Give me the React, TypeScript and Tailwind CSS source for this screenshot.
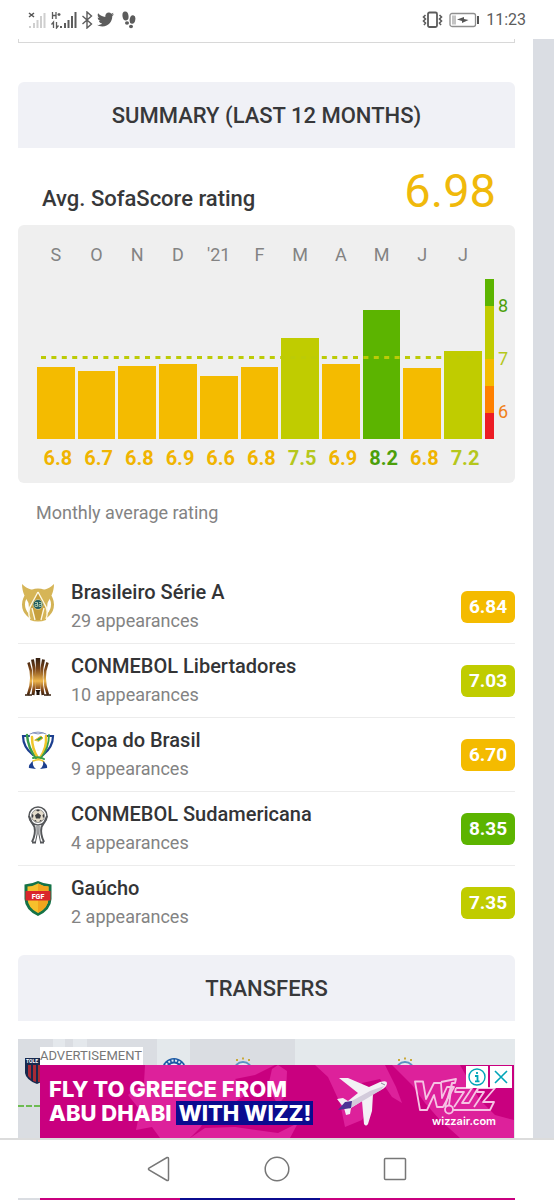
import { ReactNode } from "react";
import { FaTwitter } from "react-icons/fa";

type Month = {
  label: string;
  rating: string;
  height: number;
  bar: string;
  text: string;
};

type Tournament = {
  name: string;
  appearances: number;
  rating: string;
  badge: string;
  logo: ReactNode;
};

const AMBER = { bar: "bg-[#f4bb00]", text: "text-[#f0b400]" };
const LIME = { bar: "bg-[#c0cc00]", text: "text-[#b5c71c]" };
const GREEN = { bar: "bg-[#5cb400]", text: "text-[#4c9f0a]" };

const months: Month[] = [
  { label: "S", rating: "6.8", height: 72, ...AMBER },
  { label: "O", rating: "6.7", height: 68, ...AMBER },
  { label: "N", rating: "6.8", height: 73, ...AMBER },
  { label: "D", rating: "6.9", height: 75, ...AMBER },
  { label: "'21", rating: "6.6", height: 63, ...AMBER },
  { label: "F", rating: "6.8", height: 72, ...AMBER },
  { label: "M", rating: "7.5", height: 101, ...LIME },
  { label: "A", rating: "6.9", height: 75, ...AMBER },
  { label: "M", rating: "8.2", height: 129, ...GREEN },
  { label: "J", rating: "6.8", height: 71, ...AMBER },
  { label: "J", rating: "7.2", height: 88, ...LIME },
];

function BrasileiroLogo() {
  return (
    <svg viewBox="0 0 34 40" className="h-10 w-[34px]" aria-hidden="true">
      <circle cx="17" cy="21.500" r="14.500" fill="none" stroke="#d3b356" strokeWidth="3" />
      <path
        d="M1 1C7 7 12 7 17 7S27 7 33 1C33 10 29 15 26.500 20L25 37Q17 40 9 37L7.500 20C5 15 1 10 1 1Z"
        fill="#d6b557"
      />
      <path d="M17 9L10 24L13 37H21L24 24Z" fill="#c79f3c" />
      <path
        d="M17 9L10 22Q6 28 9 36M17 9L24 22Q28 28 25 36M11 25L14 37M23 25L20 37"
        stroke="#fdf8e4"
        strokeWidth="1.400"
        fill="none"
      />
      <circle cx="17" cy="21.500" r="5" fill="#1f5c60" stroke="#e6d38f" strokeWidth="0.800" />
      <path
        d="M14 19.500H16.500V21.500H14V23.500H16.500V19.500M18 19.500H20.500V21.500H18V23.500H20.500V19.500"
        stroke="#b9cfae"
        strokeWidth="0.800"
        fill="none"
      />
    </svg>
  );
}

function LibertadoresLogo() {
  return (
    <svg viewBox="0 0 34 40" className="h-10 w-[34px]" aria-hidden="true">
      <defs>
        <linearGradient id="libertadores" x1="0" y1="0" x2="0" y2="40" gradientUnits="userSpaceOnUse">
          <stop offset="0" stopColor="#2c1a10" />
          <stop offset="0.3" stopColor="#7a4519" />
          <stop offset="0.6" stopColor="#eeb64c" />
          <stop offset="0.8" stopColor="#8a4e1b" />
          <stop offset="1" stopColor="#1f120b" />
        </linearGradient>
      </defs>
      <g fill="none" stroke="url(#libertadores)">
        <path d="M17 1L17.010 32" strokeWidth="4.500" />
        <path d="M11.500 2.500Q15.500 19 12 38M22.500 2.500Q18.500 19 22 38" strokeWidth="3" />
        <path d="M7.500 5.500Q13.500 21 7 38M26.500 5.500Q20.500 21 27 38" strokeWidth="2.600" />
        <path d="M11 38L4 38.010M23 38L30 38.010" strokeWidth="1.500" />
      </g>
      <path d="M15.500 38V35L14.500 33H19.500L18.500 35V38Z" fill="#1f120b" />
    </svg>
  );
}

function CopaDoBrasilLogo() {
  return (
    <svg viewBox="0 0 34 40" className="h-10 w-[34px]" aria-hidden="true">
      <g fill="none" strokeLinecap="round">
        <path d="M8 5H2Q2 16 12 24M26 5H32Q32 16 22 24" stroke="#1c3f8f" strokeWidth="2.200" />
        <path d="M6 4Q7 17 15 27" stroke="#3a9d4b" strokeWidth="2.500" />
        <path d="M11 6Q11 18 17 27M25 5Q26 17 19 27" stroke="#f0c62a" strokeWidth="2.500" />
        <path d="M28 4Q28 17 20 27" stroke="#3a9d4b" strokeWidth="1.800" />
        <path d="M9 3Q17 -1 25 3M12 2Q17 4 22 2" stroke="#8795bd" strokeWidth="1" />
        <path d="M14 9L20 5L22 7L18 10Z" fill="#3a9d4b" stroke="#e0b92a" strokeWidth="1" />
        <path d="M12 27Q18 25 23 28" stroke="#3a9d4b" strokeWidth="2" />
        <path d="M12 30Q20 27 23 31" stroke="#f0c62a" strokeWidth="1.500" />
      </g>
      <path d="M12 30Q7 34 8 37L15 38Q11 35 12 30ZM22 30Q27 34 26 37L19 38Q23 35 22 30Z" fill="#1c3f8f" />
    </svg>
  );
}

function SudamericanaLogo() {
  return (
    <svg viewBox="0 0 34 40" className="h-10 w-[34px]" aria-hidden="true">
      <g fill="none" stroke="#55575a">
        <circle cx="17" cy="11" r="9" strokeWidth="1.500" />
        <path d="M8 11Q10 17 13.500 22Q15 29 11 37M26 11Q24 17 20.500 22Q19 29 23 37" strokeWidth="2" />
        <path d="M16 21Q17 29 14.500 37M18 21Q17 29 19.500 37" strokeWidth="1" />
        <path d="M11 37.500H15M19 37.500H23" strokeWidth="2" />
      </g>
      <circle cx="17" cy="11" r="6.500" fill="#e4dccb" stroke="#777" strokeWidth="0.800" />
      <path
        d="M17 8L20 10.300L19 13.500H15L14 10.300ZM17 4.500L19 5.500L17 6.500L15 5.500ZM11 9L12.500 10L12 13L11 12ZM23 9L21.500 10L22 13L23 12ZM13 15.500L15 15L15.500 17ZM21 15.500L19 15L18.500 17Z"
        fill="#3f3f42"
      />
    </svg>
  );
}

function GauchoLogo() {
  return (
    <svg viewBox="0 0 34 40" className="h-10 w-[34px]" aria-hidden="true">
      <path
        d="M3.500 5.500Q11 5 17 2Q23 5 30.500 5.500V20Q30 31 17 37Q4 31 3.500 20Z"
        fill="#157347"
      />
      <path d="M6.500 7.500Q13 7 17 4.500Q21 7 27.500 7.500V20Q27 29 17 34Q7 29 6.500 20Z" fill="#f6c02c" />
      <path d="M17 4.500Q21 7 27.500 7.500V20Q27 29 17 34Z" fill="#f2a51d" />
      <path d="M4.500 12H29.500V21.500H4.500Z" fill="#d9262c" />
      <text
        x="17"
        y="19.500"
        textAnchor="middle"
        fontFamily="Roboto, sans-serif"
        fontSize="7"
        fontWeight="900"
        fill="#fff"
      >
        FGF
      </text>
    </svg>
  );
}

const tournaments: Tournament[] = [
  {
    name: "Brasileiro Série A",
    appearances: 29,
    rating: "6.84",
    badge: "bg-[#f4bb00]",
    logo: <BrasileiroLogo />,
  },
  {
    name: "CONMEBOL Libertadores",
    appearances: 10,
    rating: "7.03",
    badge: "bg-[#c0cc00]",
    logo: <LibertadoresLogo />,
  },
  {
    name: "Copa do Brasil",
    appearances: 9,
    rating: "6.70",
    badge: "bg-[#f4bb00]",
    logo: <CopaDoBrasilLogo />,
  },
  {
    name: "CONMEBOL Sudamericana",
    appearances: 4,
    rating: "8.35",
    badge: "bg-[#5cb400]",
    logo: <SudamericanaLogo />,
  },
  {
    name: "Gaúcho",
    appearances: 2,
    rating: "7.35",
    badge: "bg-[#c0cc00]",
    logo: <GauchoLogo />,
  },
];

function StatusBar() {
  return (
    <header className="flex h-[39px] items-center justify-between px-7 text-[#5c5c5c]">
      <div className="flex items-center gap-1">
        {/* SIM 1, no signal */}
        <svg viewBox="0 0 18 18" className="size-[18px]" aria-hidden="true">
          <path d="M1 2L6 6M6 2L1 6" stroke="#555" strokeWidth="1.500" />
          <path
            d="M2 17V15M6 17V12M9.500 17V9M13 17V5M16.500 17V2"
            stroke="#cfcfcf"
            strokeWidth="2"
          />
        </svg>
        {/* SIM 2, H+ */}
        <svg viewBox="0 0 27 18" className="h-[18px] w-[27px]" aria-hidden="true">
          <g stroke="currentColor" fill="none">
            <path d="M2.500 1V8M6 1V8M2.500 4.500H6M7.500 3.500H10.500M9 2V5" strokeWidth="1.300" />
            <path d="M3.500 17V11L1.500 13.500M6.500 11V17L8.500 14.500" strokeWidth="1.300" />
            <path
              d="M11 17V15M15 17V12M18.500 17V9M22 17V5M25.500 17V1"
              strokeWidth="2"
            />
          </g>
        </svg>
        <svg viewBox="0 0 12 18" className="h-[18px] w-3" aria-hidden="true">
          <path
            d="M1.500 5L10.500 13L6 17V1L10.500 5L1.500 13"
            fill="none"
            stroke="currentColor"
            strokeWidth="1.400"
          />
        </svg>
        <FaTwitter className="size-[17px]" />
        <svg viewBox="0 0 14 18" className="ml-1 h-[18px] w-[14px]" aria-hidden="true">
          <g fill="currentColor">
            <ellipse cx="3.500" cy="5" rx="3" ry="4.500" transform="rotate(-8 3.500 5)" />
            <ellipse cx="5" cy="12" rx="2" ry="1.800" />
            <ellipse cx="10.500" cy="8.500" rx="2.800" ry="4.300" transform="rotate(10 10.500 8.500)" />
            <ellipse cx="9" cy="15.500" rx="2" ry="1.800" />
          </g>
        </svg>
      </div>
      <div className="flex items-center gap-[6px]">
        <svg viewBox="0 0 21 18" className="h-[18px] w-[21px]" aria-hidden="true">
          <g fill="none" stroke="currentColor">
            <rect x="6" y="1.500" width="9" height="14.500" rx="1.500" strokeWidth="1.800" />
            <path
              d="M3.500 4L1.500 6L3.500 8L1.500 10L3.500 12L2 14M17.500 4L19.500 6L17.500 8L19.500 10L17.500 12L19 14"
              strokeWidth="1.600"
            />
          </g>
        </svg>
        <svg viewBox="0 0 31 16" className="h-4 w-[31px]" aria-hidden="true">
          <rect x="1" y="1.500" width="25.500" height="13" rx="2" fill="none" stroke="#8f8f8f" strokeWidth="1.300" />
          <rect x="3" y="3.500" width="4" height="9" fill="#c4c4c4" />
          <path d="M8 7.500L15 5V7L19.500 8L13 11V9Z" fill="#555" />
          <path d="M29 4V12" stroke="#555" strokeWidth="2" />
        </svg>
        <span className="text-base leading-5">11:23</span>
      </div>
    </header>
  );
}

function SectionTitle({ children }: { children: ReactNode }) {
  return (
    <h2 className="rounded-t-md bg-[#f0f1f6] pt-[2px] text-center text-[22px] leading-[64px] font-medium text-[#37383a] uppercase">
      {children}
    </h2>
  );
}

function RatingChart() {
  return (
    <div className="h-[258px] rounded-md bg-[#efefef] pt-5 pr-[7px] pl-[19px]">
      <div className="flex gap-[3px]">
        <div className="relative grid flex-1 grid-cols-11 gap-x-[3px]">
          {months.map((month, i) => (
            <div key={i} className="flex flex-col text-center">
              <span className="text-lg leading-5 text-[#838383]">
                {month.label}
              </span>
              <div className="mt-[14px] flex h-40 items-end">
                <div
                  className={`w-full ${month.bar}`}
                  style={{ height: month.height }}
                />
              </div>
              <span
                className={`mt-[7px] pl-1 text-xl leading-6 font-bold ${month.text}`}
              >
                {month.rating}
              </span>
            </div>
          ))}
          {/* Average line */}
          <svg
            className="absolute top-[111px] left-1 h-[3px] w-[98%]"
            aria-hidden="true"
          >
            <line
              x1="0"
              y1="1.500"
              x2="100%"
              y2="1.500"
              stroke="#bccb06"
              strokeWidth="3"
              strokeDasharray="5 5.400"
            />
          </svg>
        </div>
        {/* Rating scale */}
        <div className="mt-[34px] flex gap-1">
          <div className="flex h-40 w-[9px] flex-col">
            <div className="h-[27px] bg-[#5cb400]" />
            <div className="h-[53px] bg-[#c0cc00]" />
            <div className="h-[27px] bg-[#f4bb00]" />
            <div className="h-[27px] bg-[#ff8000]" />
            <div className="flex-1 bg-[#ec1c24]" />
          </div>
          <div className="flex flex-col gap-[33px] pt-[17px] text-lg leading-5">
            <span className="text-[#4c9f0a]">8</span>
            <span className="text-[#b5c71c]">7</span>
            <span className="text-[#f08019]">6</span>
          </div>
        </div>
      </div>
    </div>
  );
}

function TournamentRow({ tournament }: { tournament: Tournament }) {
  return (
    <li className="flex h-[74px] items-center border-b border-[#ececec] last:border-b-0">
      <div className="mr-4 ml-[3px] -mt-2">{tournament.logo}</div>
      <div className="min-w-0 flex-1">
        <p className="text-xl leading-7 font-medium text-[#333436]">
          {tournament.name}
        </p>
        <p className="text-lg leading-[30px] text-[#838383]">
          {tournament.appearances} appearances
        </p>
      </div>
      <span
        className={`w-[54px] rounded-md text-center text-[19px] leading-8 font-bold text-white ${tournament.badge}`}
      >
        {tournament.rating}
      </span>
    </li>
  );
}

function Plane() {
  return (
    <svg viewBox="0 0 54 50" className="h-[50px] w-[54px]" aria-hidden="true">
      <path
        d="M3 1L12 1L33 10L44 5Q51 3 51 6Q51 10 45 13L37 17L36 34L32 47Q30 50 28 47L26 24L15 31L14 37L10 38L8 31L1 22L7 21L12 24L22 16Z"
        fill="#f3f0f5"
      />
      <path d="M12 26L34 14L48 9L45 13L30 22L13 32Z" fill="#d3cbdb" />
      <path d="M2 33L9 25L16 24L15 31L9 32Z" fill="#4b3395" />
      <path d="M45 6L49 8" stroke="#8d859b" strokeWidth="1" />
    </svg>
  );
}

function WizzLogo() {
  return (
    <svg viewBox="0 0 82 38" className="h-[38px] w-[82px]" aria-hidden="true">
      <g fill="none" stroke="#f6c3e4" strokeWidth="1.800" strokeLinejoin="round">
        <path d="M1 4.500H9L12 22L20 6H27L28 21L33 10H40L29 30H23L20 18L13 33H6Z" />
        <path d="M27 5L42 2L41 6H38L35 28M38 6L31 30" />
        <circle cx="35" cy="32.500" r="4" />
        <path d="M42 11H58L48 26H55L64 11H81L69 25H80L76 33H39M42 11L41 15H50L40 30M64 11L63 15H70L60 30" />
      </g>
    </svg>
  );
}

function AdBanner() {
  return (
    <div className="absolute inset-x-0 top-2 bottom-0 flex flex-col items-start pr-px pl-[22px]">
      <span className="bg-white pr-px text-[13px] leading-[18px] text-[#777]">
        ADVERTISEMENT
      </span>
      <div className="relative flex w-full flex-1 items-start overflow-hidden bg-[#c9007f] pt-2 pl-[9px]">
        {/* Map shapes behind the copy */}
        <svg
          className="absolute inset-0 h-full w-full"
          viewBox="0 0 474 73"
          preserveAspectRatio="none"
          aria-hidden="true"
        >
          <g fill="#dd219b">
            <path d="M105 0H235L215 10L195 14L208 28L188 42L170 48L160 63L150 73H120L112 62L96 65L100 45L88 30L104 18Z" />
            <path d="M238 0L247 6L246 30L238 40L228 22L232 4Z" />
            <path d="M275 0H345L356 22L362 38L352 32L340 14L322 18L330 40L322 55L305 62L300 38L288 12Z" />
            <path d="M352 0H420L440 35L455 50L474 55V73H420L400 55L385 38L372 20Z" />
            <path d="M150 73L165 63L195 62L238 68L258 58L250 73Z" />
          </g>
        </svg>
        <p className="relative mt-1 flex-1 font-[Inter] text-[22px] leading-6 font-extrabold whitespace-nowrap text-white">
          FLY TO GREECE FROM
          <br />
          ABU DHABI{" "}
          <span className="inline-block bg-[#0b0b8f] px-[2px]">WITH WIZZ!</span>
        </p>
        <div className="relative mt-1 mr-6">
          <Plane />
        </div>
        <div className="relative mt-1 mr-[18px] flex flex-col items-end">
          <WizzLogo />
          <a
            href="#wizz"
            className="font-[Inter] text-[11px] leading-3 font-semibold text-white"
          >
            wizzair.com
          </a>
        </div>
        <div className="absolute top-px right-[2px] flex gap-[2px]">
          <button type="button" aria-label="Ad info" className="bg-white p-[2px]">
            <svg viewBox="0 0 18 18" className="size-[18px]" aria-hidden="true">
              <circle cx="9" cy="9" r="8" fill="none" stroke="#00a5b8" strokeWidth="1.400" />
              <path d="M7 8H9.500V13M7 13.300H11.500M9 4V6" fill="none" stroke="#00a5b8" strokeWidth="1.800" />
            </svg>
          </button>
          <button type="button" aria-label="Close ad" className="bg-white p-[2px]">
            <svg viewBox="0 0 18 18" className="size-[18px]" aria-hidden="true">
              <path d="M3 3L15 15M15 3L3 15" stroke="#00a5b8" strokeWidth="1.600" />
            </svg>
          </button>
        </div>
      </div>
    </div>
  );
}

function ClubCrest({ stars }: { stars?: boolean }) {
  return (
    <svg viewBox="0 0 26 30" className="h-[30px] w-[26px]" aria-hidden="true">
      {stars ? (
        <g>
          <path d="M6 3H8M12 1.500H14M18 3H20" stroke="#c9a93a" strokeWidth="2" />
          <circle cx="13" cy="14" r="9" fill="#e6edf2" stroke="#5c93c4" strokeWidth="2" />
          <circle cx="13" cy="14" r="5" fill="#7fb2d8" />
        </g>
      ) : (
        <g>
          <circle cx="13" cy="13" r="12" fill="#1b5aa5" />
          <circle cx="13" cy="13" r="9.500" fill="none" stroke="#dbe7f2" strokeWidth="2" strokeDasharray="2 1.500" />
          <circle cx="13" cy="13" r="6.500" fill="#f1f5f9" />
          <circle cx="13" cy="13" r="4.500" fill="#1b5aa5" />
        </g>
      )}
    </svg>
  );
}

function TransfersPanel() {
  return (
    <div className="relative h-[99px] overflow-hidden bg-[#dadde2]">
      <div className="flex h-full">
        <div className="w-[35px] pt-[18px] pl-[7px]">
          <svg viewBox="0 0 24 28" className="h-7 w-6" aria-hidden="true">
            <path d="M0 1H24V16Q22 23 12 27Q1 23 0 16Z" fill="#17284d" />
            <path d="M3 8H6V22L3 19ZM8 8H11V25L8 24ZM13 8H16V25H13ZM18 8H21V20L18 23Z" fill="#a62b35" />
            <text
              x="1"
              y="6"
              fontFamily="Roboto, sans-serif"
              fontSize="5"
              fontWeight="700"
              fill="#fff"
            >
              TOLE
            </text>
          </svg>
        </div>
        <div className="w-3 bg-[#e4e8ec]" />
        <div className="w-2" />
        <div className="w-[14px] bg-[#e4e8ec]" />
        <div className="w-[70px]" />
        <div className="flex w-[33px] justify-center bg-[#e4e9ec] pt-[18px]">
          <ClubCrest />
        </div>
        <div className="flex w-[105px] justify-center pt-[18px]">
          <ClubCrest stars />
        </div>
        <div className="flex flex-1 justify-center bg-[#e4e9ec] pt-[18px]">
          <ClubCrest stars />
        </div>
      </div>
      <div className="absolute top-[66px] left-0 w-[22px] border-t-2 border-dashed border-[#6dbb52]" />
      <AdBanner />
    </div>
  );
}

function NavigationBar() {
  return (
    <nav className="flex h-[60px] items-center justify-center gap-[93px] border-t-2 border-[#dcdcdc] bg-white text-[#777]">
      <button type="button" aria-label="Back">
        <svg viewBox="0 0 24 26" className="h-[26px] w-6" aria-hidden="true">
          <path
            d="M20 1.500Q21.500 1 21.500 3V23Q21.500 25 20 24.500L2 14Q1 13 2 12Z"
            fill="none"
            stroke="currentColor"
            strokeWidth="1.500"
          />
        </svg>
      </button>
      <button type="button" aria-label="Home">
        <svg viewBox="0 0 26 26" className="size-[26px]" aria-hidden="true">
          <circle cx="13" cy="13" r="11.800" fill="none" stroke="currentColor" strokeWidth="1.500" />
        </svg>
      </button>
      <button type="button" aria-label="Recent apps">
        <svg viewBox="0 0 24 24" className="size-6" aria-hidden="true">
          <rect x="1.500" y="1.500" width="21" height="21" rx="1" fill="none" stroke="currentColor" strokeWidth="1.500" />
        </svg>
      </button>
    </nav>
  );
}

export default function App() {
  return (
    <div className="overflow-hidden bg-white font-[Roboto,sans-serif]">
      <StatusBar />
      <div className="flex">
        <main className="min-w-0 flex-1 px-[18px]">
          <div className="mb-[39px] h-1 border-x border-b border-[#d8d8d8]" />

          <SectionTitle>Summary (last 12 months)</SectionTitle>
          <div className="flex h-[77px] items-end justify-between pr-[19px] pb-[11px] pl-6">
            <span className="text-[22px] leading-[30px] font-medium text-[#37383a]">
              Avg. SofaScore rating
            </span>
            <span className="text-[47px] leading-[46px] text-[#f0b90b]">
              6.98
            </span>
          </div>
          <RatingChart />
          <p className="mt-5 pl-[18px] text-lg leading-5 text-[#838383]">
            Monthly average rating
          </p>

          <ul className="mt-[47px] mb-[15px]">
            {tournaments.map((tournament) => (
              <TournamentRow key={tournament.name} tournament={tournament} />
            ))}
          </ul>

          <SectionTitle>Transfers</SectionTitle>
          <div className="pt-[18px]">
            <TransfersPanel />
          </div>
        </main>
        <aside className="w-[21px] bg-[#dadde3]" />
      </div>
      <NavigationBar />
      {/* Page edge showing below the navigation bar */}
      <div className="mr-[39px] ml-[18px] flex h-[2px]">
        <div className="w-[22px] bg-[#dadde2]" />
        <div className="w-[140px] bg-[#c9007f]" />
        <div className="w-[140px] bg-[#0b0b8f]" />
        <div className="flex-1 bg-[#c9007f]" />
      </div>
    </div>
  );
}
